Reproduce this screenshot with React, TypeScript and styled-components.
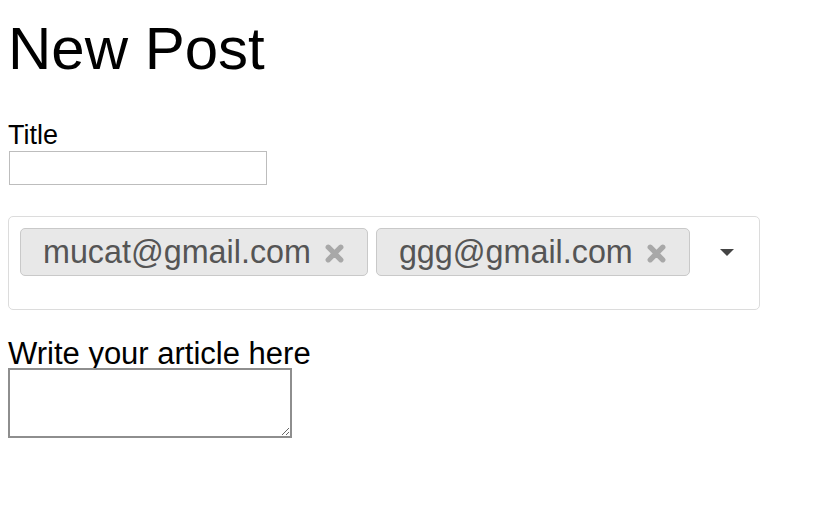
import React from "react";
import styled, { createGlobalStyle } from "styled-components";

const Global = createGlobalStyle`
  html, body { margin: 0; padding: 0; background: #fff; }
  body { padding: 8px; font-family: "Liberation Sans", Arial, sans-serif; color: #000; }
`;

const Page = styled.div`
  display: flex;
  flex-direction: column;
  align-items: flex-start;
`;

const Heading = styled.h1`
  margin: 6px 0 0 0;
  font-size: 60px;
  font-weight: 400;
  line-height: 70px;
  letter-spacing: 0;
`;

const Label = styled.label<{ $size: number; $top: number }>`
  display: block;
  font-size: ${(p) => p.$size}px;
  line-height: 32px;
  margin-top: ${(p) => p.$top}px;
`;

const TextInput = styled.input`
  box-sizing: border-box;
  width: 258px;
  height: 34px;
  margin: 0 0 0 1px;
  border: 1px solid #bdbdbd;
  padding: 0 4px;
  font-size: 16px;
  outline: none;
`;

const Select = styled.div`
  box-sizing: border-box;
  width: 752px;
  height: 94px;
  margin-top: 31px;
  border: 1px solid #dcdcdc;
  border-radius: 5px;
  padding: 11px 0 0 11px;
  display: flex;
  align-items: flex-start;
`;

const Tags = styled.div`
  display: flex;
  gap: 8px;
  flex: 1;
`;

const Tag = styled.div`
  box-sizing: border-box;
  height: 48px;
  display: flex;
  align-items: center;
  gap: 13px;
  padding: 0 22px 0 22px;
  background: #e8e8e8;
  border: 1px solid #c9c9c9;
  border-radius: 5px;
  color: #555;
  font-size: 32.3px;
`;

const Remove = styled.svg`
  width: 21px;
  height: 21px;
  margin-top: 3px;
  flex: none;
`;

const Caret = styled.svg`
  width: 14px;
  height: 7px;
  margin: 21px 25px 0 0;
  flex: none;
`;

const Area = styled.textarea`
  box-sizing: border-box;
  width: 284px;
  height: 70px;
  margin: -2px 0 0 0;
  border: 2px solid #8e8e8e;
  resize: both;
  outline: none;
`;

const TagItem = ({ text }: { text: string }) => (
  <Tag>
    <span>{text}</span>
    <Remove viewBox="0 0 20 20">
      <path d="M4 4 L16 16 M16 4 L4 16" stroke="#a8a8a8" strokeWidth="5" strokeLinecap="round" />
    </Remove>
  </Tag>
);

export default function App() {
  return (
    <Page>
      <Global />
      <Heading>New Post</Heading>
      <Label $size={27} $top={35}>Title</Label>
      <TextInput type="text" />
      <Select>
        <Tags>
          <TagItem text="mucat@gmail.com" />
          <TagItem text="ggg@gmail.com" />
        </Tags>
        <Caret viewBox="0 0 14 7">
          <path d="M0 0 L14 0 L7 7 Z" fill="#444" />
        </Caret>
      </Select>
      <Label $size={31} $top={28}>Write your article here</Label>
      <Area />
    </Page>
  );
}
